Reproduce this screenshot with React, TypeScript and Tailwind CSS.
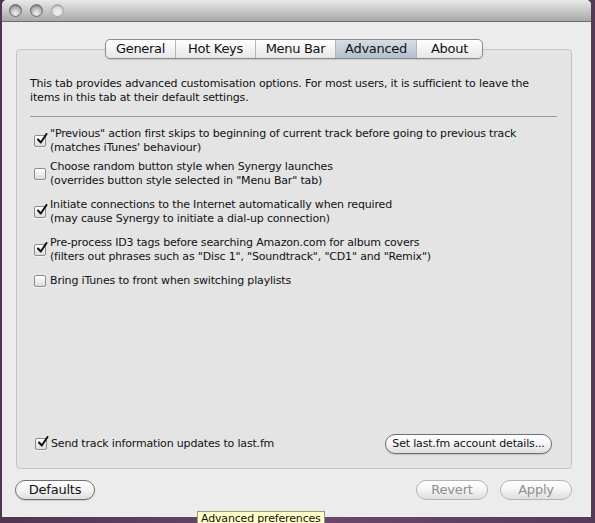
import type { ReactNode } from 'react';

const font = { fontFamily: '"Lucida Grande", "DejaVu Sans", sans-serif' };

function Light({ dim = false }: { dim?: boolean }) {
  return (
    <div
      className={`w-[13px] h-[13px] rounded-full border ${
        dim ? 'border-[#a9a9a9] bg-[radial-gradient(circle_at_50%_70%,#f4f4f4,#c9c9c9)]' : 'border-[#6f6f6f] bg-[radial-gradient(circle_at_50%_75%,#f2f2f2_0%,#b4b4b4_55%,#8a8a8a_100%)]'
      } shadow-[inset_0_1px_1px_rgba(0,0,0,0.25)]`}
    />
  );
}

function Check({ on = false }: { on?: boolean }) {
  return (
    <div className="relative w-[12px] h-[12px] shrink-0 rounded-[2px] border border-[#8c8c8c] bg-gradient-to-b from-[#ffffff] to-[#dcdcdc] shadow-[0_1px_0_rgba(255,255,255,0.6)]">
      {on && (
        <svg viewBox="0 0 12 12" className="absolute left-[1px] top-[-3px] w-[12px] h-[12px]">
          <path d="M2 6.5 L4.8 9.5 L10.5 1" fill="none" stroke="#111" strokeWidth="2" strokeLinecap="round" strokeLinejoin="round" />
        </svg>
      )}
    </div>
  );
}

function Option({ on, children, className = '' }: { on?: boolean; children: ReactNode; className?: string }) {
  return (
    <div className={`flex items-center gap-[4px] pl-[4px] ${className}`}>
      <Check on={on} />
      <div className="text-[11px] leading-[14px] tracking-[-0.17px] text-[#111]">{children}</div>
    </div>
  );
}

function Pill({ children, dim = false, className = '' }: { children: ReactNode; dim?: boolean; className?: string }) {
  return (
    <div
      className={`flex items-center justify-center h-[20px] rounded-full border bg-gradient-to-b from-[#ffffff] via-[#f4f4f4] to-[#dedede] ${
        dim ? 'border-[#b4b4b4] text-[#8e8e8e]' : 'border-[#6f6f6f] text-[#111] shadow-[0_1px_1px_rgba(0,0,0,0.15)]'
      } ${className}`}
    >
      {children}
    </div>
  );
}

const tabs = ['General', 'Hot Keys', 'Menu Bar', 'Advanced', 'About'];
const tabWidths = ['w-[69px]', 'w-[80px]', 'w-[80px]', 'w-[81px]', 'w-[66px]'];

export default function App() {
  return (
    <div className="relative w-[595px] h-[523px] overflow-hidden bg-gradient-to-r from-[#4e3650] via-[#6b4a6c] to-[#553a57]" style={font}>
      <div className="ml-[2px] w-[589px] h-[517px] rounded-t-[5px] overflow-hidden bg-[#ececec] flex flex-col">
        {/* title bar */}
        <div className="h-[22px] shrink-0 flex items-center gap-[8px] pl-[7px] bg-gradient-to-b from-[#e9e9e9] to-[#a9a9a9] border-b border-[#6d6d6d]">
          <Light />
          <Light />
          <Light dim />
        </div>

        <div className="flex flex-col pl-[14px] pt-[17px]">
          {/* tabs */}
          <div className="relative z-10 flex self-start ml-[89px] h-[20px] rounded-[5px] border border-[#8b8b8b] overflow-hidden bg-gradient-to-b from-[#ffffff] to-[#e6e6e6] shadow-[0_1px_1px_rgba(0,0,0,0.12)]">
            {tabs.map((t, i) => (
              <div
                key={t}
                className={`${tabWidths[i]} flex items-center justify-center text-[13px] leading-[18px] tracking-[-0.3px] ${
                  i > 0 ? 'border-l border-[#b5b5b5]' : ''
                } ${t === 'Advanced' ? 'bg-gradient-to-b from-[#d6dde6] to-[#b3bfcc] text-[#111]' : 'text-[#111]'}`}
              >
                {t}
              </div>
            ))}
          </div>

          {/* tab box */}
          <div className="-mt-[10px] w-[556px] h-[420px] rounded-[4px] border border-[#c4c4c4] bg-[#e4e4e4] flex flex-col pl-[13px] pr-[14px] pt-[27px] pb-[14px]">
            <p className="text-[11px] leading-[14px] tracking-[-0.17px] text-[#111]">
              This tab provides advanced customisation options. For most users, it is sufficient to leave the
              <br />
              items in this tab at their default settings.
            </p>
            <div className="mt-[11px] h-px bg-[#9a9a9a]" />

            <Option on className="mt-[10px]">
              "Previous" action first skips to beginning of current track before going to previous track
              <br />
              (matches iTunes' behaviour)
            </Option>
            <Option className="mt-[5px]">
              Choose random button style when Synergy launches
              <br />
              (overrides button style selected in "Menu Bar" tab)
            </Option>
            <Option on className="mt-[10px]">
              Initiate connections to the Internet automatically when required
              <br />
              (may cause Synergy to initiate a dial-up connection)
            </Option>
            <Option on className="mt-[10px]">
              Pre-process ID3 tags before searching Amazon.com for album covers
              <br />
              (filters out phrases such as "Disc 1", "Soundtrack", "CD1" and "Remix")
            </Option>
            <Option className="mt-[10px]">Bring iTunes to front when switching playlists</Option>

            <div className="mt-auto flex items-center justify-between pr-[5px]">
              <Option on className="pl-[5px]">Send track information updates to last.fm</Option>
              <Pill className="w-[167px] text-[11px] tracking-[-0.17px]">Set last.fm account details...</Pill>
            </div>
          </div>

          {/* bottom buttons */}
          <div className="mt-[11px] flex items-center pr-[19px] -ml-[1px]">
            <Pill className="w-[80px] text-[13px] tracking-[-0.2px]">Defaults</Pill>
            <div className="flex-1" />
            <Pill dim className="w-[72px] text-[13px] tracking-[-0.2px]">Revert</Pill>
            <Pill dim className="ml-[12px] w-[72px] text-[13px] tracking-[-0.2px]">Apply</Pill>
          </div>
        </div>
      </div>

      {/* tooltip */}
      <div className="absolute left-[197px] top-[511px] px-[3px] h-[16px] bg-[#ffffc7] border border-[#9a9a7a] text-[11px] leading-[14px] tracking-[-0.17px] text-[#111]">
        Advanced preferences
      </div>
    </div>
  );
}
